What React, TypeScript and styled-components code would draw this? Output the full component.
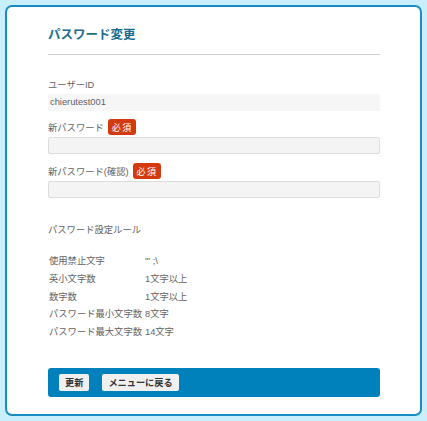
import React from 'react';
import styled, { createGlobalStyle } from 'styled-components';

const GlobalStyle = createGlobalStyle`
  html, body {
    margin: 0;
    padding: 0;
    background: #c9eefc;
  }
  body {
    font-family: "Liberation Sans", "Noto Sans CJK JP", sans-serif;
    color: #626262;
  }
`;

const Page = styled.div`
  padding: 5px;
  width: 427px;
  height: 421px;
  box-sizing: border-box;
`;

const Card = styled.main`
  box-sizing: border-box;
  height: 411px;
  width: 417px;
  background: #fff;
  border: 2px solid #1a8cc4;
  border-radius: 7px;
  padding: 20px 40px 0 41px;
`;

const Title = styled.h1`
  margin: 0;
  font-size: 12.5px;
  line-height: 17px;
  font-weight: bold;
  color: #1d6c8f;
  padding-bottom: 10px;
  border-bottom: 1px solid #cfcfcf;
`;

const Form = styled.div`
  display: flex;
  flex-direction: column;
  padding-top: 21px;
`;

const Label = styled.div<{ $top?: number }>`
  display: flex;
  align-items: center;
  gap: 4px;
  font-size: 9.3px;
  height: 16px;
  margin-top: ${({ $top }) => $top ?? 0}px;
  margin-bottom: 2px;
`;

const Badge = styled.span`
  display: inline-flex;
  align-items: center;
  justify-content: center;
  background: #d43a10;
  color: #fff;
  font-size: 9px;
  height: 16px;
  padding: 0 3px 0 4px;
  border-radius: 3px;
  letter-spacing: 1.5px;
`;

const ReadOnly = styled.div`
  height: 17px;
  background: #f6f6f6;
  font-size: 9.3px;
  line-height: 17px;
  padding-left: 2px;
`;

const Input = styled.input`
  box-sizing: border-box;
  height: 17px;
  width: 100%;
  background: #f4f4f4;
  border: 1px solid #dcdcdc;
  border-radius: 2px;
  margin: 0;
  padding: 0 4px;
`;

const RulesTitle = styled.div`
  font-size: 9.3px;
  margin-top: 24px;
  height: 16px;
  line-height: 16px;
`;

const Rules = styled.div`
  display: grid;
  grid-template-columns: auto auto;
  justify-content: start;
  column-gap: 3px;
  row-gap: 2px;
  margin-top: 16px;
  font-size: 9.3px;
  line-height: 15.8px;
  padding-left: 1px;
`;

const ButtonBar = styled.div`
  display: flex;
  gap: 13px;
  align-items: center;
  background: #0081bc;
  border-radius: 3px;
  height: 29px;
  padding: 0 11px;
  margin-top: 27px;
`;

const Button = styled.button`
  height: 17px;
  padding: 0 6px;
  background: #f0f0f0;
  border: none;
  border-radius: 2px;
  font-family: "Liberation Sans", "Noto Sans CJK JP", sans-serif;
  font-size: 9.2px;
  font-weight: bold;
  color: #333;
`;

const rules = [
  ['使用禁止文字', `"' ;\\`],
  ['英小文字数', '1文字以上'],
  ['数字数', '1文字以上'],
  ['パスワード最小文字数', '8文字'],
  ['パスワード最大文字数', '14文字'],
];

export default function App() {
  return (
    <>
      <GlobalStyle />
      <Page>
        <Card>
          <Title>パスワード変更</Title>
          <Form>
            <Label>ユーザーID</Label>
            <ReadOnly>chierutest001</ReadOnly>
            <Label $top={8}>
              新パスワード<Badge>必須</Badge>
            </Label>
            <Input type="password" />
            <Label $top={9}>
              新パスワード(確認)<Badge>必須</Badge>
            </Label>
            <Input type="password" />
            <RulesTitle>パスワード設定ルール</RulesTitle>
            <Rules>
              {rules.map(([k, v]) => (
                <React.Fragment key={k}>
                  <span>{k}</span>
                  <span>{v}</span>
                </React.Fragment>
              ))}
            </Rules>
            <ButtonBar>
              <Button>更新</Button>
              <Button>メニューに戻る</Button>
            </ButtonBar>
          </Form>
        </Card>
      </Page>
    </>
  );
}
